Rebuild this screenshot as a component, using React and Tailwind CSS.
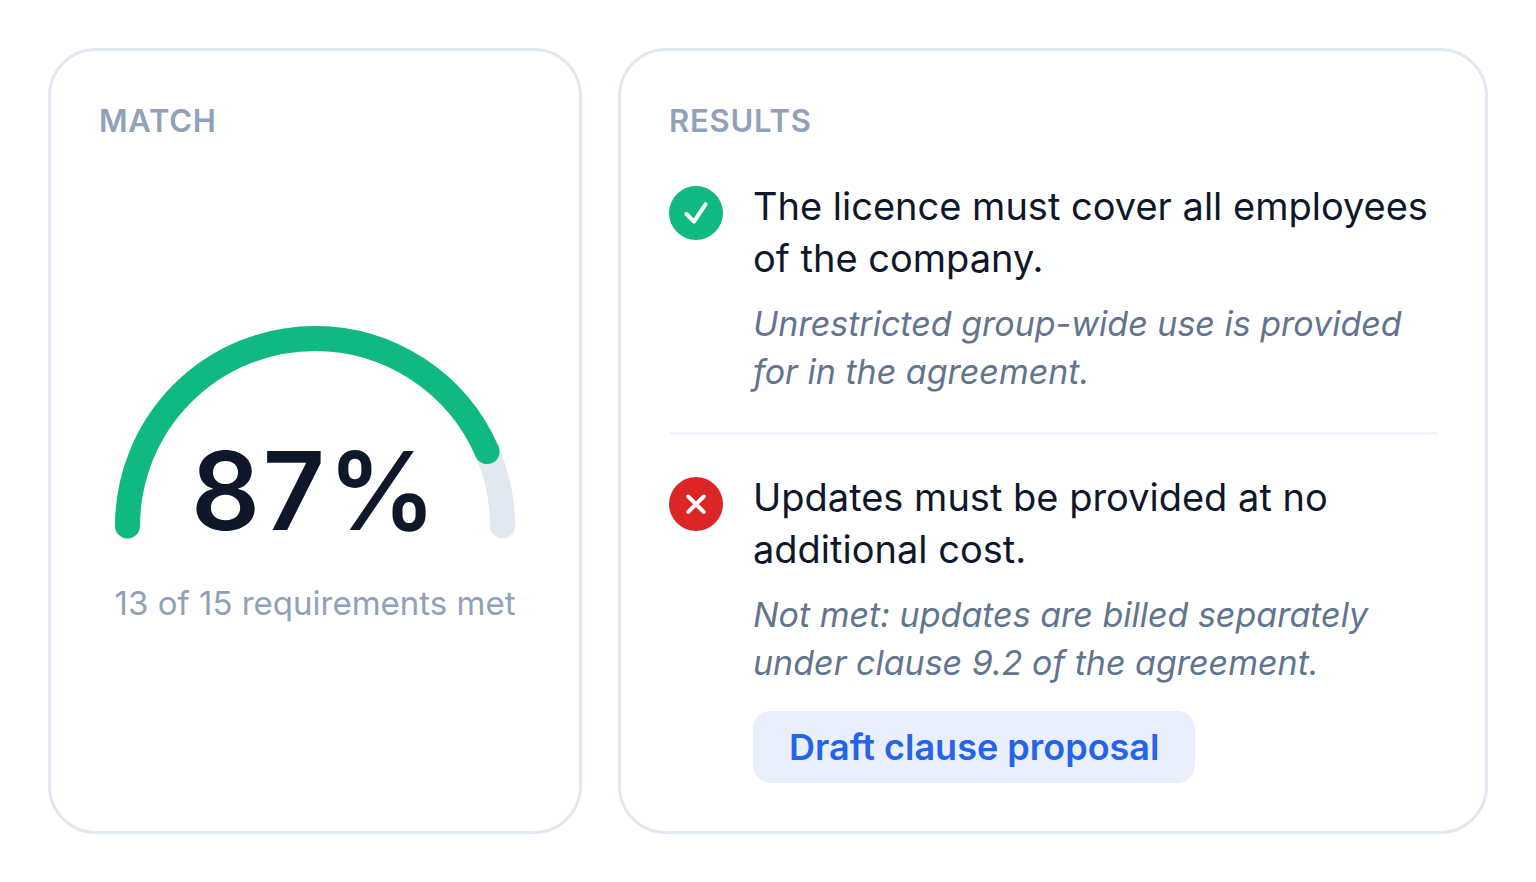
// src/App.jsx
import React from "react";

const requirementsMet = 13;
const requirementsTotal = 15;

const results = [
  {
    id: 1,
    met: true,
    title: "The licence must cover all employees of the company.",
    detail: "Unrestricted group-wide use is provided for in the agreement.",
  },
  {
    id: 2,
    met: false,
    title: "Updates must be provided at no additional cost.",
    detail: "Not met: updates are billed separately under clause 9.2 of the agreement.",
    action: "Draft clause proposal",
  },
];

function Card({ title, children }) {
  return (
    <section className="flex min-w-0 flex-col rounded-[48px] border-3 border-[#e2e8f0] bg-white p-12">
      <h2 className="text-[31px] leading-[43px] font-semibold tracking-wide text-slate-400 uppercase">{title}</h2>
      {children}
    </section>
  );
}

function Gauge({ percent }) {
  const arc = "M12.5 200 A187.5 187.5 0 0 1 387.5 200";

  return (
    <div className="relative w-full">
      <svg viewBox="0 0 400 213" className="w-full" aria-hidden="true">
        <path d={arc} fill="none" stroke="#e2e8f0" strokeWidth="25" strokeLinecap="round" />
        <path
          d={arc}
          fill="none"
          stroke="#10b981"
          strokeWidth="25"
          strokeLinecap="round"
          pathLength="100"
          strokeDasharray={`${percent} 200`}
        />
      </svg>
      <p className="absolute inset-x-0 -bottom-1.5 text-center text-[108px] leading-[108px] font-semibold tracking-wide text-[#0f172a]">
        {percent}%
      </p>
    </div>
  );
}

function StatusIcon({ met }) {
  return (
    <svg viewBox="0 0 54 54" className="mt-1.5 size-[54px] shrink-0" aria-hidden="true">
      <circle cx="27" cy="27" r="27" fill={met ? "#10b981" : "#dc2626"} />
      <path
        d={met ? "M17.4 28 L25 35.6 L36.6 18.2" : "M19.3 19.5 L34.7 34.9 M34.7 19.5 L19.3 34.9"}
        fill="none"
        stroke="#fff"
        strokeWidth="4"
        strokeLinecap="round"
        strokeLinejoin="round"
      />
    </svg>
  );
}

export default function App() {
  const percent = Math.round((requirementsMet / requirementsTotal) * 100);

  return (
    <main className="grid min-h-screen grid-cols-[534fr_870fr] gap-9 bg-white p-12 font-['Inter',sans-serif]">
      <Card title="Match">
        <div className="mt-7 flex flex-1 flex-col items-center justify-center px-4">
          <Gauge percent={percent} />
          <p className="mt-10 text-center text-[33px] leading-[48px] whitespace-nowrap text-slate-400">
            {requirementsMet} of {requirementsTotal} requirements met
          </p>
        </div>
      </Card>

      <Card title="Results">
        <ul className="mt-[38px] divide-y-3 divide-slate-100">
          {results.map((result) => (
            <li key={result.id} className="flex gap-[30px] py-9 first:pt-0 last:pb-0">
              <StatusIcon met={result.met} />
              <div className="flex-1">
                <h3 className="text-[38px] leading-[52px] text-[#0f172a]">{result.title}</h3>
                <p className="mt-4 text-[34px] leading-[48px] text-slate-500 italic">{result.detail}</p>
                {result.action && (
                  <button
                    type="button"
                    className="mt-6 rounded-[18px] bg-[#e9effd] px-9 text-[36px] leading-[72px] font-semibold text-[#2563eb]"
                  >
                    {result.action}
                  </button>
                )}
              </div>
            </li>
          ))}
        </ul>
      </Card>
    </main>
  );
}
